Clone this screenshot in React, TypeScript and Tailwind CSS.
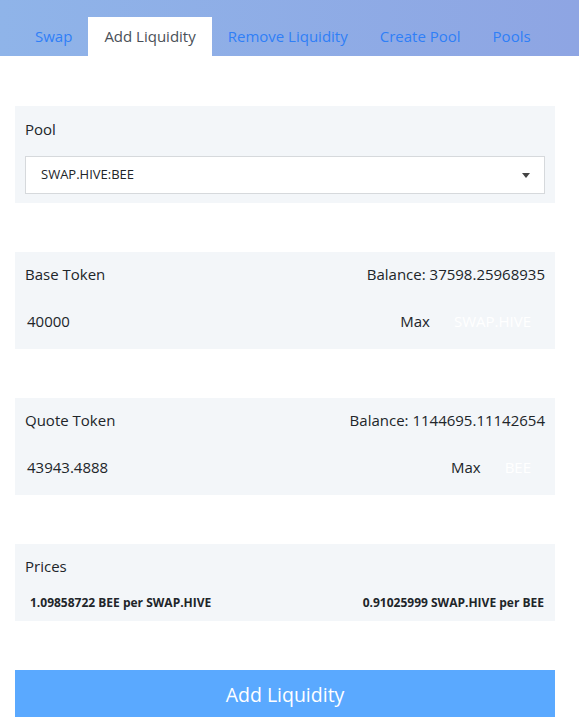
const tabs = ['Swap', 'Add Liquidity', 'Remove Liquidity', 'Create Pool', 'Pools']

function TokenCard({ title, balance, amount, symbol }: { title: string; balance: string; amount: string; symbol: string }) {
  return (
    <div className="bg-[#f3f6f9] px-[10px] h-[97px] flex flex-col">
      <div className="flex justify-between items-center h-[45px] text-[15px] text-[#212529]">
        <span>{title}</span>
        <span>Balance: {balance}</span>
      </div>
      <div className="flex items-center h-[48px] text-[15px] text-[#212529]">
        <span className="flex-1 pl-[2px]">{amount}</span>
        <span>Max</span>
        <span className="pl-[24px] pr-[14px] text-white">{symbol}</span>
      </div>
    </div>
  )
}

export default function App() {
  return (
    <div className="w-[579px] h-[717px] overflow-hidden bg-white font-['Open_Sans','Noto_Sans',sans-serif]">
      <div className="h-[56px] bg-gradient-to-r from-[#8fb4e9] to-[#8ea5e3] flex items-end pl-[19px]">
        {tabs.map((t) => (
          <div
            key={t}
            className={
              t === 'Add Liquidity'
                ? 'h-[39px] px-[16px] flex items-center bg-white text-[#495057] text-[15px]'
                : 'h-[39px] px-[16px] flex items-center text-[#2f7ff7] text-[15px]'
            }
          >
            {t}
          </div>
        ))}
      </div>

      <div className="w-[540px] ml-[15px] pt-[50px] flex flex-col gap-[49px]">
        <div className="bg-[#f3f6f9] px-[10px] h-[97px] flex flex-col">
          <div className="h-[46px] flex items-center text-[15px] text-[#212529]">Pool</div>
          <div className="mt-[4px] h-[38px] bg-white border border-[#d6d9dc] flex items-center justify-between pl-[15px] pr-[14px] text-[13px] text-[#212529]">
            <span>SWAP.HIVE:BEE</span>
            <svg width="8" height="5" viewBox="0 0 8 5"><path d="M0 0h8L4 5z" fill="#444" /></svg>
          </div>
        </div>

        <TokenCard title="Base Token" balance="37598.25968935" amount="40000" symbol="SWAP.HIVE" />
        <TokenCard title="Quote Token" balance="1144695.11142654" amount="43943.4888" symbol="BEE" />

        <div className="bg-[#f3f6f9] px-[10px] h-[77px] flex flex-col">
          <div className="h-[45px] flex items-center text-[15px] text-[#212529]">Prices</div>
          <div className="flex justify-between items-center h-[28px] pl-[5px] pr-[1px] text-[12px] font-bold text-[#212529]">
            <span>1.09858722 BEE per SWAP.HIVE</span>
            <span>0.91025999 SWAP.HIVE per BEE</span>
          </div>
        </div>

        <button className="h-[50px] bg-[#5aa9ff] text-white text-[19.5px] flex items-center justify-center">
          Add Liquidity
        </button>
      </div>
    </div>
  )
}
